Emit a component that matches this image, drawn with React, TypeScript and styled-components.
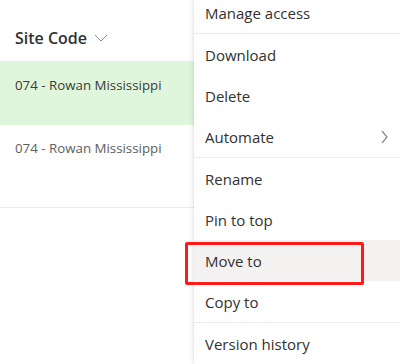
import React from "react";
import styled, { createGlobalStyle } from "styled-components";

const GlobalStyle = createGlobalStyle`
  html, body {
    margin: 0;
    padding: 0;
    background: #ffffff;
    overflow: hidden;
  }
  body {
    font-family: "Open Sans", "Noto Sans", sans-serif;
    color: #323130;
  }
`;

const Page = styled.div`
  position: relative;
  width: 400px;
  height: 364px;
  overflow: hidden;
`;

const Table = styled.div`
  display: flex;
  flex-direction: column;
  width: 400px;
`;

const HeaderRow = styled.div`
  display: flex;
  align-items: center;
  gap: 7px;
  height: 62px;
  padding: 14px 0 0 15px;
  box-sizing: border-box;
  border-bottom: 1px solid #edebe9;
  font-size: 16px;
  font-weight: 600;
  color: #323130;
`;

const Row = styled.div<{ $selected?: boolean; $height: number }>`
  height: ${(p) => p.$height}px;
  box-sizing: border-box;
  padding: 14px 0 0 15px;
  background: ${(p) => (p.$selected ? "#dff6dd" : "#ffffff")};
  border-bottom: 1px solid ${(p) => (p.$selected ? "#dff6dd" : "#edebe9")};
  font-size: 13.3px;
  color: ${(p) => (p.$selected ? "#3b3a39" : "#605e5c")};
`;

const Menu = styled.div`
  position: absolute;
  top: -8px;
  left: 194px;
  width: 220px;
  display: flex;
  flex-direction: column;
  background: #ffffff;
  box-shadow: 0 0 6px rgba(0, 0, 0, 0.14), 0 0 2px rgba(0, 0, 0, 0.08);
`;

const Item = styled.div<{ $active?: boolean }>`
  position: relative;
  display: flex;
  align-items: center;
  justify-content: space-between;
  height: 41px;
  padding: 0 26px 0 11px;
  box-sizing: border-box;
  width: 100%;
  font-size: 15px;
  color: #323130;
  background: ${(p) => (p.$active ? "#f3f2f1" : "transparent")};
`;

const Divider = styled.div`
  height: 1px;
  background: #edebe9;
`;

const Callout = styled.div`
  position: absolute;
  left: -9px;
  top: 2px;
  width: 173px;
  height: 37px;
  border: 3px solid #ff1a1a;
  border-radius: 2px;
`;

const Chevron = styled.svg`
  flex-shrink: 0;
`;

const ItemLabel = styled.span``;

type MenuEntry = { label: string; divider?: boolean; sub?: boolean; active?: boolean };

const entries: MenuEntry[] = [
  { label: "Manage access", divider: true },
  { label: "Download" },
  { label: "Delete" },
  { label: "Automate", sub: true, divider: true },
  { label: "Rename" },
  { label: "Pin to top" },
  { label: "Move to", active: true },
  { label: "Copy to", divider: true },
  { label: "Version history" },
];

export default function App() {
  return (
    <Page>
      <GlobalStyle />
      <Table>
        <HeaderRow>
          Site Code
          <Chevron width="14" height="8" viewBox="0 0 14 8">
            <path d="M1 1l6 6 6-6" fill="none" stroke="#8a8886" strokeWidth="1" />
          </Chevron>
        </HeaderRow>
        <Row $selected $height={63}>074 - Rowan Mississippi</Row>
        <Row $height={83}>074 - Rowan Mississippi</Row>
      </Table>
      <Menu>
        {entries.map((e) => (
          <React.Fragment key={e.label}>
            <Item $active={e.active}>
              <ItemLabel>{e.label}</ItemLabel>
              {e.sub && (
                <Chevron width="7" height="14" viewBox="0 0 7 14">
                  <path d="M1 1l5 6-5 6" fill="none" stroke="#8a8886" strokeWidth="1.2" />
                </Chevron>
              )}
              {e.active && <Callout />}
            </Item>
            {e.divider && <Divider />}
          </React.Fragment>
        ))}
      </Menu>
    </Page>
  );
}
